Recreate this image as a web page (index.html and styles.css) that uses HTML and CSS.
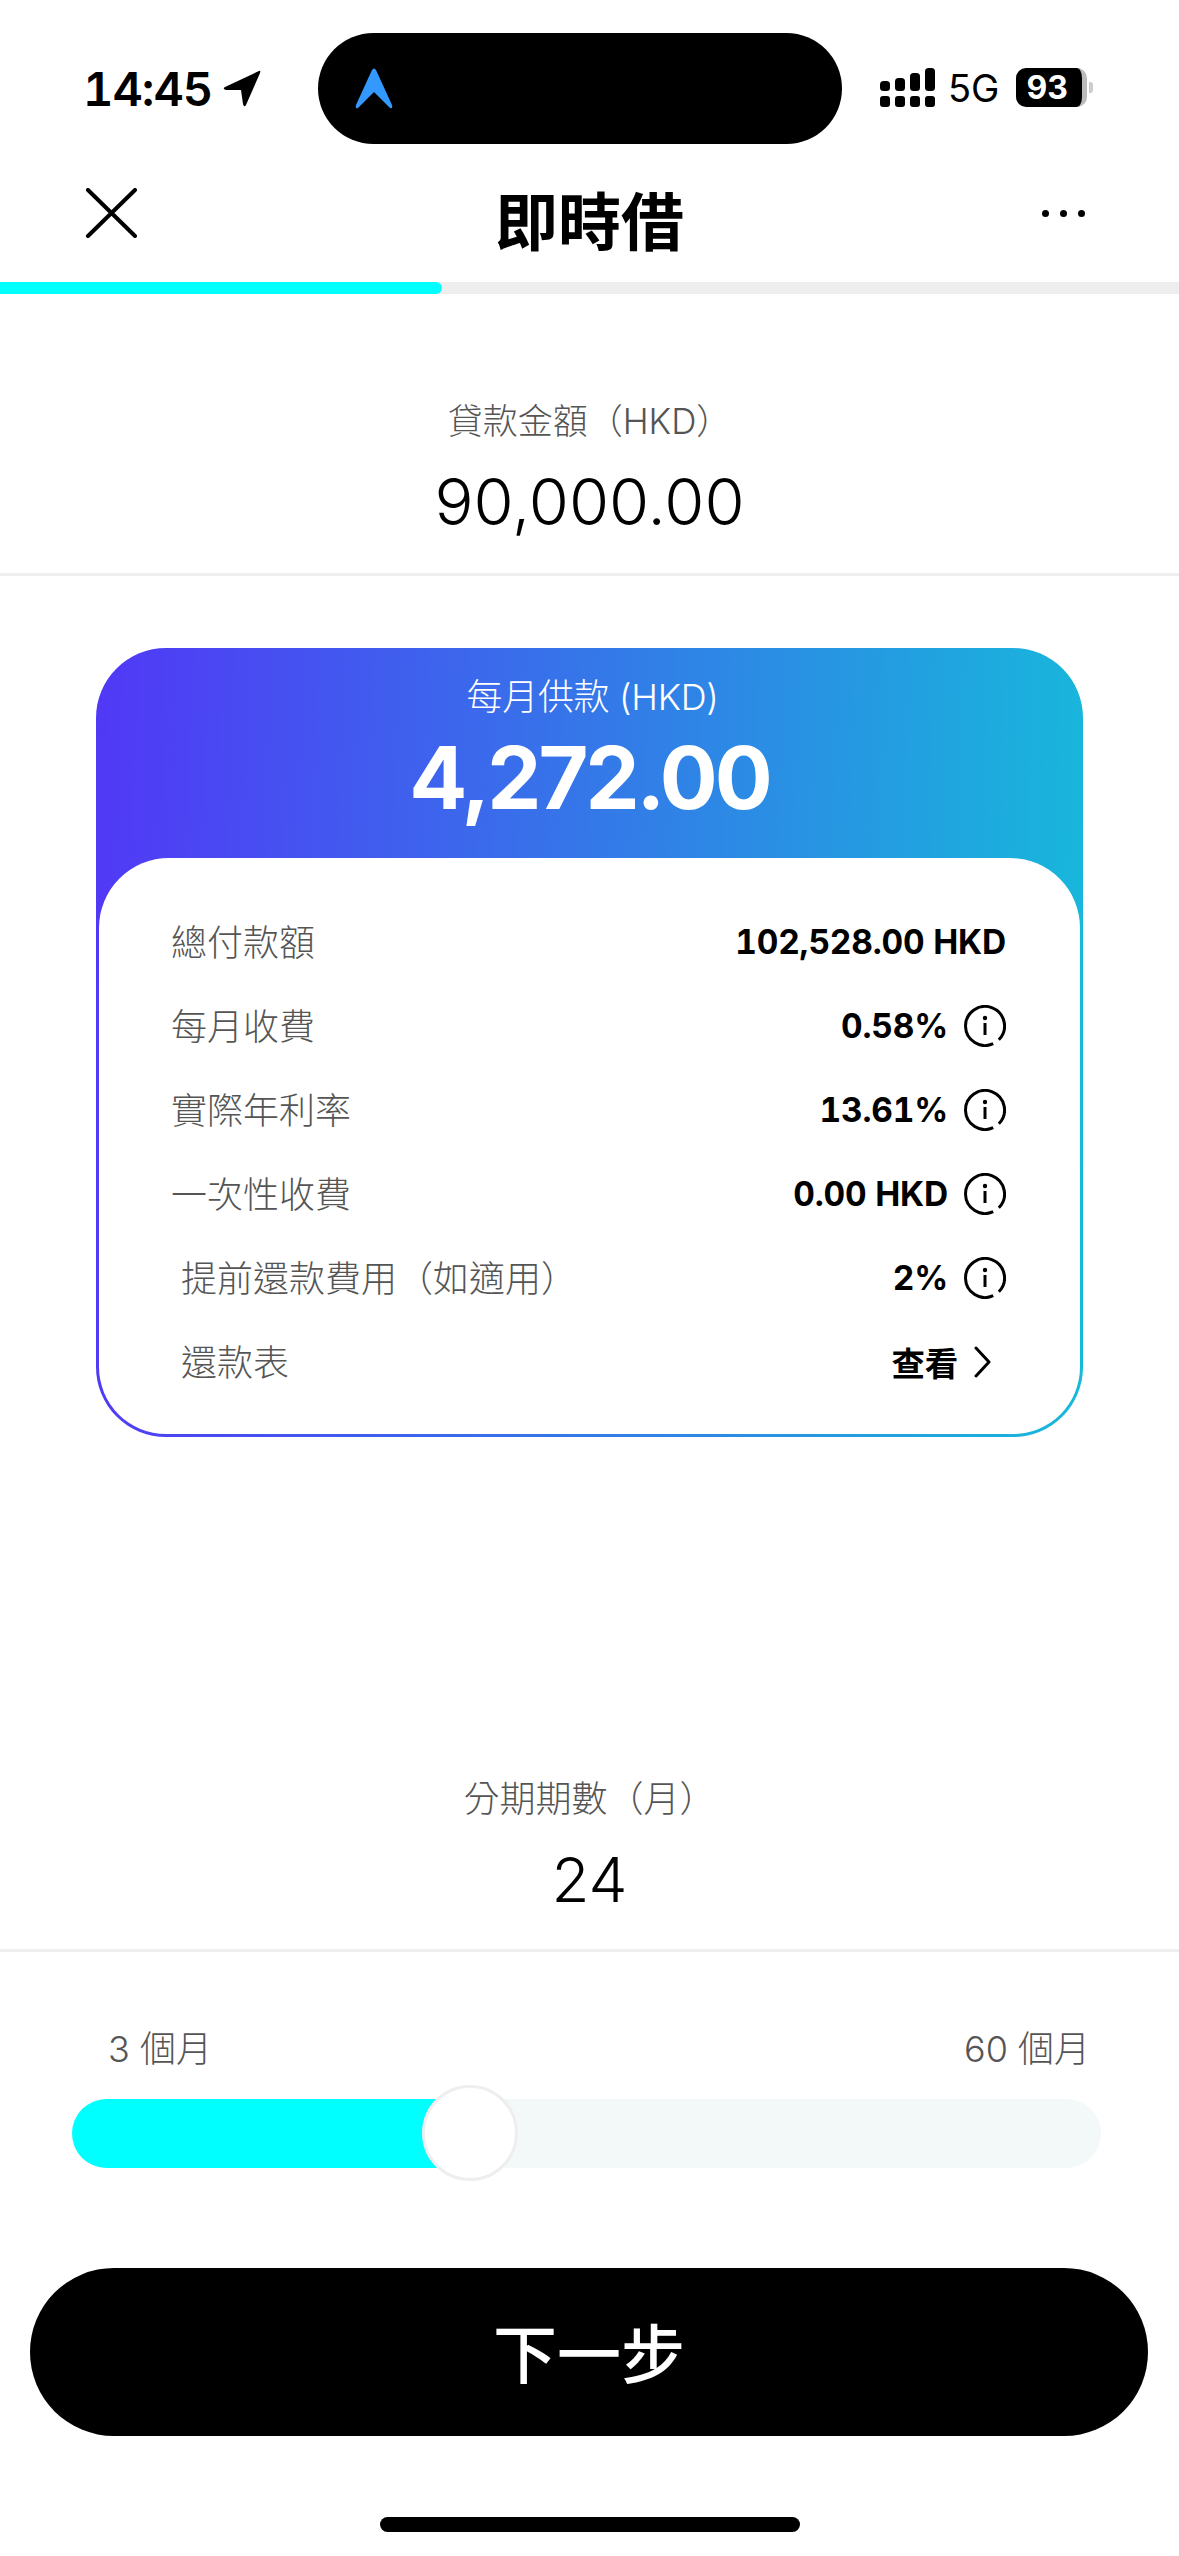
FILE: index.html
```html
<!DOCTYPE html>
<html lang="zh-Hant">

<head>
    <meta charset="utf-8">
    <title>即時借</title>
    <link rel="stylesheet" href="styles.css">
</head>

<body>
    <div class="phone">

        <div class="status">
            <div class="status-left">
                <span class="time">14:45</span>
                <svg class="loc" width="38" height="37" viewBox="0 0 38 37">
                    <path d="M36 1 Q38 0 37 3 L23 35 Q21 38 20 34 L18 20 L3 20 Q-1 19 2 17 Z" fill="#000"/>
                </svg>
            </div>
            <div class="island">
                <svg width="38" height="41" viewBox="0 0 38 41">
                    <path d="M17 2 Q19 -1 21 2 L37 37 Q38 41 35 40 L19 24 L3 40 Q0 41 1 37 Z" fill="#3399ff"/>
                </svg>
            </div>
            <div class="status-right">
                <svg class="signal" width="55" height="39" viewBox="0 0 55 39">
                    <rect x="0" y="13" width="10" height="10" rx="3.5"/>
                    <rect x="15" y="10" width="10" height="13" rx="3.5"/>
                    <rect x="30" y="5" width="10" height="18" rx="3.5"/>
                    <rect x="45" y="0" width="10" height="23" rx="3.5"/>
                    <rect x="0" y="28" width="10" height="11" rx="3"/>
                    <rect x="15" y="28" width="10" height="11" rx="3"/>
                    <rect x="30" y="28" width="10" height="11" rx="3"/>
                    <rect x="45" y="28" width="10" height="11" rx="3"/>
                </svg>
                <span class="net">5G</span>
                <div class="battery"><span>93</span></div>
                <div class="battery-nub"></div>
            </div>
        </div>

        <div class="nav">
            <svg class="close" width="52" height="50" viewBox="0 0 52 50">
                <path d="M3 2 L50 48 M50 2 L3 48" stroke="#000" stroke-width="4" stroke-linecap="round"/>
            </svg>
            <h1>即時借</h1>
            <div class="more"><i></i><i></i><i></i></div>
        </div>

        <div class="progress"><div class="progress-fill"></div></div>

        <div class="field amount-field">
            <div class="field-label">貸款金額（HKD）</div>
            <div class="field-value amount">90,000.00</div>
        </div>

        <div class="card">
            <div class="card-head">
                <div class="card-label">每月供款 (HKD)</div>
                <div class="card-total">4,272.00</div>
            </div>
            <div class="card-body">
                <div class="row">
                    <span class="row-label">總付款額</span>
                    <span class="row-value">102,528.00 HKD</span>
                </div>
                <div class="row">
                    <span class="row-label">每月收費</span>
                    <span class="row-value">0.58%
                        <svg class="info" width="42" height="42" viewBox="0 0 42 42"><path d="M29.2 38.7 A19.5 19.5 0 1 1 34.8 34.8" fill="none" stroke="#000" stroke-width="3"/><circle cx="21" cy="13" r="2.2"/><path d="M21 18 V30" stroke="#000" stroke-width="3"/></svg>
                    </span>
                </div>
                <div class="row">
                    <span class="row-label">實際年利率</span>
                    <span class="row-value">13.61%
                        <svg class="info" width="42" height="42" viewBox="0 0 42 42"><path d="M29.2 38.7 A19.5 19.5 0 1 1 34.8 34.8" fill="none" stroke="#000" stroke-width="3"/><circle cx="21" cy="13" r="2.2"/><path d="M21 18 V30" stroke="#000" stroke-width="3"/></svg>
                    </span>
                </div>
                <div class="row">
                    <span class="row-label">一次性收費</span>
                    <span class="row-value">0.00 HKD
                        <svg class="info" width="42" height="42" viewBox="0 0 42 42"><path d="M29.2 38.7 A19.5 19.5 0 1 1 34.8 34.8" fill="none" stroke="#000" stroke-width="3"/><circle cx="21" cy="13" r="2.2"/><path d="M21 18 V30" stroke="#000" stroke-width="3"/></svg>
                    </span>
                </div>
                <div class="row indent">
                    <span class="row-label">提前還款費用（如適用）</span>
                    <span class="row-value">2%
                        <svg class="info" width="42" height="42" viewBox="0 0 42 42"><path d="M29.2 38.7 A19.5 19.5 0 1 1 34.8 34.8" fill="none" stroke="#000" stroke-width="3"/><circle cx="21" cy="13" r="2.2"/><path d="M21 18 V30" stroke="#000" stroke-width="3"/></svg>
                    </span>
                </div>
                <div class="row indent link">
                    <span class="row-label">還款表</span>
                    <span class="row-value">查看
                        <svg class="chevron" width="18" height="32" viewBox="0 0 18 32"><path d="M2 2 L15 16 L2 30" fill="none" stroke="#000" stroke-width="3" stroke-linecap="round" stroke-linejoin="round"/></svg>
                    </span>
                </div>
            </div>
        </div>

        <div class="field term-field">
            <div class="field-label">分期期數（月）</div>
            <div class="field-value term">24</div>
        </div>

        <div class="range-labels">
            <span>3 個月</span>
            <span>60 個月</span>
        </div>

        <div class="slider">
            <div class="slider-fill"></div>
            <div class="slider-thumb"></div>
        </div>

        <button class="next">下一步</button>

        <div class="home-bar"></div>
    </div>
</body>

</html>
```

FILE: styles.css
```css
* {
    box-sizing: border-box;
}

body {
    margin: 0;
    background-color: #fff;
    font-family: Inter, "Noto Sans CJK TC", sans-serif;
    color: #000;
}

.phone {
    width: 1179px;
    height: 2556px;
    overflow: hidden;
}

/* status bar */
.status {
    display: flex;
    align-items: center;
    height: 111px;
    margin-top: 33px;
}

.status-left {
    display: flex;
    align-items: center;
    width: 318px;
    padding-left: 83px;
    gap: 13px;
}

.time {
    font-size: 47px;
    font-weight: 600;
    font-feature-settings: "tnum";
    letter-spacing: -1px;
}

.loc {
    margin-left: -2px;
}

.island {
    display: flex;
    align-items: center;
    width: 524px;
    height: 111px;
    padding-left: 37px;
    background-color: #000;
    border-radius: 56px;
}

.status-right {
    display: flex;
    align-items: center;
    padding-left: 38px;
    margin-top: -2px;
}

.net {
    margin-left: 13px;
    font-size: 38px;
    font-weight: 400;
}

.battery {
    display: flex;
    align-items: center;
    width: 71px;
    height: 39px;
    margin-left: 17px;
    padding-left: 10px;
    background-color: #000;
    border-right: 5px solid #bbb;
    border-radius: 10px;
    color: #fff;
    font-size: 32px;
    font-weight: 700;
}

.battery-nub {
    width: 4px;
    height: 11px;
    margin-left: 2px;
    background-color: #ccc;
    border-radius: 0 3px 3px 0;
}

/* top navigation */
.nav {
    display: flex;
    align-items: center;
    justify-content: space-between;
    height: 138px;
    padding: 0 91px 0 85px;
}

.nav h1 {
    margin: 18px 0 0 0;
    font-size: 63px;
    font-weight: 700;
    line-height: 80px;
}

.more {
    display: flex;
    gap: 11px;
    width: 52px;
    margin-right: -6px;
}

.more i {
    display: block;
    width: 7px;
    height: 7px;
    border-radius: 50%;
    background-color: #000;
}

.progress {
    height: 12px;
    background-color: #eee;
}

.progress-fill {
    width: 442px;
    height: 12px;
    background-color: #00ffff;
    border-radius: 0 6px 6px 0;
}

/* centered label + value blocks */
.field {
    border-bottom: 3px solid #eee;
    text-align: center;
}

.amount-field {
    height: 282px;
    padding-top: 102px;
}

.term-field {
    height: 324px;
    margin-top: 191px;
    padding-top: 146px;
}

.field-label {
    font-size: 35px;
    font-weight: 300;
    line-height: 50px;
    color: #555;
}

.term-field .field-label {
    font-size: 36px;
}

.field-value {
    font-weight: 300;
}

.amount {
    margin-top: 16px;
    font-size: 65px;
    line-height: 80px;
}

.term {
    margin-top: 16px;
    font-size: 62px;
    line-height: 80px;
}

/* monthly payment card */
.card {
    width: 987px;
    height: 789px;
    margin: 72px 0 0 96px;
    background: linear-gradient(92deg, #5138f6, #17b9db);
    border-radius: 70px;
    overflow: hidden;
}

.card-head {
    height: 210px;
    padding-top: 21px;
    text-align: center;
    color: #fff;
}

.card-label {
    padding-left: 6px;
    font-size: 36px;
    font-weight: 300;
    letter-spacing: -0.3px;
    line-height: 56px;
}

.card-total {
    margin-top: 3px;
    font-size: 86px;
    font-weight: 700;
    line-height: 100px;
    letter-spacing: -3px;
}

.card-body {
    height: 576px;
    margin: 0 3px;
    padding: 40px 74px 0 72px;
    background-color: #fff;
    border-radius: 70px 70px 67px 67px;
}

.row {
    display: flex;
    align-items: center;
    justify-content: space-between;
    height: 84px;
}

.row.indent {
    padding-left: 10px;
}

.row.link {
    padding-right: 14px;
}

.row-label {
    font-size: 36px;
    font-weight: 300;
    color: #555;
}

.row-value {
    display: flex;
    align-items: center;
    gap: 16px;
    margin-top: 3px;
    font-size: 33.5px;
    font-weight: 700;
    font-feature-settings: "tnum";
    letter-spacing: -0.2px;
}

/* term slider */
.range-labels {
    display: flex;
    justify-content: space-between;
    margin-top: 72px;
    padding: 0 89px 0 108px;
    font-size: 36px;
    font-weight: 300;
    line-height: 50px;
    color: #555;
}

.slider {
    position: relative;
    height: 69px;
    margin: 25px 78px 0 72px;
    background-color: #f3f8f8;
    border-radius: 35px;
}

.slider-fill {
    width: 398px;
    height: 69px;
    background-color: #00ffff;
    border-radius: 35px 0 0 35px;
}

.slider-thumb {
    position: absolute;
    top: -14px;
    left: 350px;
    width: 96px;
    height: 96px;
    background-color: #fff;
    border: 3px solid #eee;
    border-radius: 50%;
}

.next {
    display: block;
    width: 1118px;
    height: 168px;
    margin: 100px 0 0 30px;
    padding-bottom: 6px;
    border: none;
    border-radius: 84px;
    background-color: #000;
    color: #fff;
    font-family: inherit;
    font-size: 64px;
    font-weight: 500;
}

.home-bar {
    width: 420px;
    height: 15px;
    margin: 81px 0 0 380px;
    background-color: #000;
    border-radius: 8px;
}
```
